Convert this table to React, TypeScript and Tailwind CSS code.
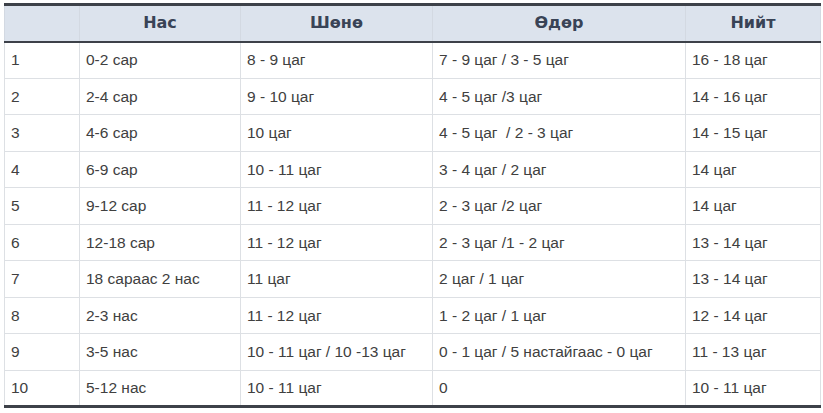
const rows: [string, string, string, string, string][] = [
  ["1", "0-2 сар", "8 - 9 цаг", "7 - 9 цаг / 3 - 5 цаг", "16 - 18 цаг"],
  ["2", "2-4 сар", "9 - 10 цаг", "4 - 5 цаг /3 цаг", "14 - 16 цаг"],
  ["3", "4-6 сар", "10 цаг", "4 - 5 цаг  / 2 - 3 цаг", "14 - 15 цаг"],
  ["4", "6-9 сар", "10 - 11 цаг", "3 - 4 цаг / 2 цаг", "14 цаг"],
  ["5", "9-12 сар", "11 - 12 цаг", "2 - 3 цаг /2 цаг", "14 цаг"],
  ["6", "12-18 сар", "11 - 12 цаг", "2 - 3 цаг /1 - 2 цаг", "13 - 14 цаг"],
  ["7", "18 сараас 2 нас", "11 цаг", "2 цаг / 1 цаг", "13 - 14 цаг"],
  ["8", "2-3 нас", "11 - 12 цаг", "1 - 2 цаг / 1 цаг", "12 - 14 цаг"],
  ["9", "3-5 нас", "10 - 11 цаг / 10 -13 цаг", "0 - 1 цаг / 5 настайгаас - 0 цаг", "11 - 13 цаг"],
  ["10", "5-12 нас", "10 - 11 цаг", "0", "10 - 11 цаг"],
];

const headers = ["", "Нас", "Шөнө", "Өдөр", "Нийт"];

export default function App() {
  return (
    <div className="min-h-[413px] bg-white pt-[3px] pl-[4px]">
      <table className="w-[816px] table-fixed border-collapse font-['Liberation_Sans',Arial,sans-serif] text-[15.5px] text-[#404040]">
        <colgroup>
          <col className="w-[75px]" />
          <col className="w-[161px]" />
          <col className="w-[192px]" />
          <col className="w-[253px]" />
          <col className="w-[135px]" />
        </colgroup>
        <thead>
          <tr className="h-[37px] border-t-[3px] border-b-2 border-t-[#3d4149] border-b-[#3d4149] bg-[#dce3ed]">
            {headers.map((h, i) => (
              <th
                key={i}
                className="border-x border-x-[#d3d9e2] p-0 text-center font-['DejaVu_Sans',Verdana,sans-serif] text-[16px] font-bold text-[#394356]"
              >
                {h}
              </th>
            ))}
          </tr>
        </thead>
        <tbody>
          {rows.map((r, ri) => (
            <tr
              key={ri}
              className={`h-[36.5px] ${ri === rows.length - 1 ? "border-b-[3px] border-b-[#3d4149]" : "border-b border-b-[#dde0e4]"}`}
            >
              {r.map((c, ci) => (
                <td
                  key={ci}
                  className="whitespace-pre border-x border-x-[#dde0e4] px-[6px] py-0 align-middle"
                >
                  {c}
                </td>
              ))}
            </tr>
          ))}
        </tbody>
      </table>
    </div>
  );
}
